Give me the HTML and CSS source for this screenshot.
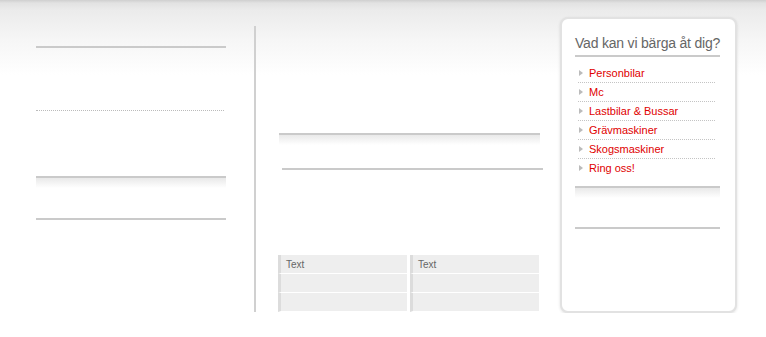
FILE: index.html
```html
<!DOCTYPE html>
<html>
    <head>
        <meta charset="utf-8">
        <title>Bärgning</title>
        <link rel="stylesheet" href="styles.css">
    </head>
    <body>
        <div class="page">
            <div class="left">
                <div class="rule first"></div>
                <div class="dots"></div>
                <div class="shade left-shade"></div>
                <div class="rule last"></div>
            </div>
            <div class="divider"></div>
            <div class="middle">
                <div class="shade mid-shade"></div>
                <div class="rule mid-rule"></div>
                <table class="grid" cellspacing="0" cellpadding="0">
                    <tr><td>Text</td><td>Text</td></tr>
                    <tr><td>&nbsp;</td><td>&nbsp;</td></tr>
                    <tr><td>&nbsp;</td><td>&nbsp;</td></tr>
                </table>
            </div>
            <div class="box">
                <h2>Vad kan vi bärga åt dig?</h2>
                <ul class="menu">
                    <li><a href="#">Personbilar</a></li>
                    <li><a href="#">Mc</a></li>
                    <li><a href="#">Lastbilar &amp; Bussar</a></li>
                    <li><a href="#">Grävmaskiner</a></li>
                    <li><a href="#">Skogsmaskiner</a></li>
                    <li><a href="#">Ring oss!</a></li>
                </ul>
                <div class="shade box-shade"></div>
                <div class="rule box-rule"></div>
            </div>
        </div>
    </body>
</html>
```

FILE: styles.css
```css
body {
    margin: 0;
    font-family: "Liberation Sans", Arial, sans-serif;
    background: #fff linear-gradient(to bottom, #cfcfcf 0px, #e2e2e2 3px, #ebebeb 10px, #f6f6f6 40px, #fff 75px) no-repeat;
    background-size: 100% 80px;
    color: #666;
}

div.page {
    display: flex;
    align-items: flex-start;
    padding-top: 17px;
}

div.rule {
    height: 0;
    border-top: solid 2px #cacaca;
}

div.shade {
    height: 10px;
    border-top: solid 2px #cacaca;
    background: linear-gradient(to bottom, #e9e9e9, #fff);
}

/* left column */

div.left {
    margin-left: 36px;
    width: 190px;
    padding-top: 29px;
}

div.dots {
    margin-top: 62px;
    width: 188px;
    border-top: dotted 1px #bbb;
}

div.left-shade {
    margin-top: 65px;
}

div.left .last {
    margin-top: 30px;
}

div.divider {
    margin-left: 28px;
    margin-top: 9px;
    width: 2px;
    height: 286px;
    background-color: #d0d0d0;
}

/* middle column */

div.middle {
    margin-left: 23px;
    width: 264px;
    padding-top: 116px;
}

div.mid-shade {
    width: 261px;
}

div.mid-rule {
    margin-top: 23px;
    margin-left: 3px;
    width: 261px;
}

table.grid {
    margin-top: 85px;
    margin-left: -1px;
    width: 261px;
    border-collapse: separate;
    border-spacing: 0;
}

table.grid td {
    width: 126px;
    height: 18px;
    padding: 0 0 0 5px;
    background-color: #eee;
    border-left: solid 3px #dcdcdc;
    border-bottom: solid 1px #fff;
    font-size: 10px;
    color: #666;
    vertical-align: middle;
}

table.grid tr td:first-child {
    border-right: solid 3px #fff;
}

/* right box */

div.box {
    margin-left: 17px;
    width: 145px;
    height: 258px;
    padding: 16px 15px 18px 13px;
    border: solid 2px #e2e2e2;
    border-radius: 8px;
    box-shadow: 0 1px 3px rgba(0, 0, 0, 0.12);
    background-color: #fff;
}

div.box h2 {
    margin: 0;
    padding-bottom: 4px;
    border-bottom: solid 2px #cacaca;
    font-size: 14px;
    letter-spacing: -0.2px;
    font-weight: normal;
    color: #666;
    white-space: nowrap;
}

ul.menu {
    list-style: none;
    margin: 7px 5px 9px 3px;
    padding: 0;
}

ul.menu li {
    height: 18px;
    padding-left: 11px;
    border-bottom: dotted 1px #c4c4c4;
    font-size: 11px;
    line-height: 18px;
    position: relative;
}

ul.menu li:last-child {
    border-bottom: none;
}

ul.menu li::before {
    content: "";
    position: absolute;
    left: 1px;
    top: 6px;
    border-left: solid 4px #bbb;
    border-top: solid 3px transparent;
    border-bottom: solid 3px transparent;
}

ul.menu a {
    color: #e00000;
    text-decoration: none;
}

div.box-shade {
    margin-top: 2px;
}

div.box-rule {
    margin-top: 29px;
}
```
